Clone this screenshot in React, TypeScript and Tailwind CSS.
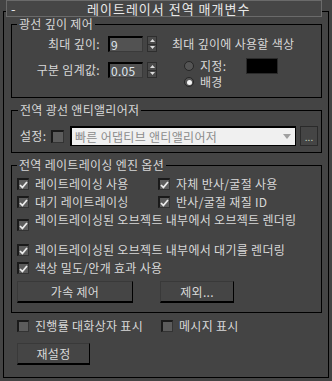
import React from "react";

function Check({ checked = false }: { checked?: boolean }) {
  return (
    <span className="flex h-[12px] w-[12px] shrink-0 items-center justify-center border-l-2 border-t-2 border-b border-r border-l-[#1a1a1a] border-t-[#1a1a1a] border-b-[#333] border-r-[#333] bg-[#5c5c5c]">
      {checked && (
        <svg width="9" height="8" viewBox="0 0 9 8">
          <path d="M1 4 L3.4 6.5 L8 1" fill="none" stroke="#ececec" strokeWidth="1.8" />
        </svg>
      )}
    </span>
  );
}

function Radio({ checked = false }: { checked?: boolean }) {
  return (
    <span className="flex h-[10px] w-[10px] shrink-0 items-center justify-center rounded-full border border-[#262626] bg-[#555555]">
      {checked && <span className="h-[5px] w-[5px] rounded-full bg-[#f4f4f4]" />}
    </span>
  );
}

function Spinner() {
  return (
    <div className="flex h-[16px] w-[10px] flex-col border border-[#2e2e2e] bg-[#4a4a4a]">
      <div className="flex flex-1 items-center justify-center border-b border-[#2e2e2e]">
        <svg width="5" height="3" viewBox="0 0 5 3">
          <path d="M0 3 L2.5 0 L5 3 Z" fill="#dcdcdc" />
        </svg>
      </div>
      <div className="flex flex-1 items-center justify-center">
        <svg width="5" height="3" viewBox="0 0 5 3">
          <path d="M0 0 L2.5 3 L5 0 Z" fill="#dcdcdc" />
        </svg>
      </div>
    </div>
  );
}

function NumField({ value }: { value: string }) {
  return (
    <div className="flex h-[16px] w-[35px] items-center border-l-2 border-t-2 border-b border-r border-l-black border-t-black border-b-[#3a3a3a] border-r-[#3a3a3a] bg-[#525252] pl-[1px] text-[#dfe6ee]">
      {value}
    </div>
  );
}

function Button({ label, w }: { label: string; w: string }) {
  return (
    <div
      className={`flex h-[22px] ${w} items-center justify-center border-l border-t border-b-2 border-r border-l-[#393939] border-t-[#393939] border-b-black border-r-black bg-[#454545]`}
    >
      {label}
    </div>
  );
}

function Row({ checked, label }: { checked?: boolean; label: string }) {
  return (
    <div className="flex h-[14px] items-center gap-[6px]">
      <Check checked={checked} />
      <span className="whitespace-nowrap">{label}</span>
    </div>
  );
}

export default function App() {
  return (
    <div className="h-[381px] w-[332px] overflow-hidden bg-[#444444] font-['Noto_Sans_CJK_KR',sans-serif] text-[12px] leading-[14px] tracking-[0.3px] text-[#d8d8d8]">
      <div className="relative z-10 ml-[6px] flex h-[17px] w-[316px] items-center border border-[#6a6a6a] bg-[#464646] text-[13px] leading-[15px] tracking-[1px] text-[#e8e8e8]">
        <span className="w-[80px] pl-[4px]">-</span>
        <span className="whitespace-nowrap">레이트레이서 전역 매개변수</span>
      </div>

      <div className="-mt-[6px] ml-[3px] flex h-[367px] w-[326px] flex-col border border-black pl-[7px] pr-[6px] pt-[5px]">
        <fieldset className="border border-black">
          <legend className="ml-[5px] px-[2px]">광선 깊이 제어</legend>
          <div className="flex pb-[8px] pt-[5px]">
            <div className="flex flex-col">
              <div className="flex h-[16px] items-center">
                <span className="w-[88px] whitespace-nowrap text-right">최대 깊이:</span>
                <div className="ml-[8px]">
                  <NumField value="9" />
                </div>
                <div className="ml-[4px]">
                  <Spinner />
                </div>
              </div>
              <div className="mt-[10px] flex h-[16px] items-center">
                <span className="w-[88px] whitespace-nowrap text-right">구분 임계값:</span>
                <div className="ml-[8px]">
                  <NumField value="0.05" />
                </div>
                <div className="ml-[4px]">
                  <Spinner />
                </div>
              </div>
            </div>
            <div className="ml-[15px] flex flex-col">
              <div className="flex h-[16px] items-center whitespace-nowrap">최대 깊이에 사용할 색상</div>
              <div className="ml-[12px] mt-[6px] flex h-[16px] items-center">
                <Radio />
                <span className="ml-[6px] w-[46px]">지정:</span>
                <span className="h-[16px] w-[32px] border border-[#2a2a2a] bg-black" />
              </div>
              <div className="ml-[12px] mt-[1px] flex h-[14px] items-center">
                <Radio checked />
                <span className="ml-[6px]">배경</span>
              </div>
            </div>
          </div>
        </fieldset>

        <fieldset className="mt-[5px] border border-black">
          <legend className="ml-[6px] px-[2px]">전역 광선 앤티앨리어저</legend>
          <div className="flex items-center pb-[6px] pl-[8px] pt-[9px]">
            <span className="w-[31px] whitespace-nowrap">설정:</span>
            <span className="flex h-[13px] w-[13px] shrink-0 border-l-2 border-t-2 border-b border-r border-l-[#1a1a1a] border-t-[#1a1a1a] border-b-[#333] border-r-[#333] bg-[#5c5c5c]" />
            <div className="ml-[6px] flex h-[20px] w-[226px] items-center justify-between border-l-2 border-t-2 border-b border-r border-black bg-[#f0f0f0] pl-[3px] pr-[4px] text-[#8c8c8c]">
              <span className="whitespace-nowrap">빠른 어댑티브 앤티앨리어저</span>
              <svg width="8" height="5" viewBox="0 0 8 5">
                <path d="M0 0 L8 0 L4 5 Z" fill="#a0a0a0" />
              </svg>
            </div>
            <div className="ml-[4px] flex h-[20px] w-[18px] items-end justify-center border border-[#2a2a2a] bg-[#454545] pb-[3px] text-[10px] leading-[10px] tracking-normal text-[#c8d8c0]">
              ...
            </div>
          </div>
        </fieldset>

        <fieldset className="mt-[5px] border border-black">
          <legend className="ml-[5px] px-[2px]">전역 레이트레이싱 엔진 옵션</legend>
          <div className="flex flex-col pb-[9px] pl-[5px] pt-[5px]">
            <div className="flex">
              <div className="w-[141px]">
                <Row checked label="레이트레이싱 사용" />
              </div>
              <Row checked label="자체 반사/굴절 사용" />
            </div>
            <div className="mt-[4px] flex">
              <div className="w-[141px]">
                <Row checked label="대기 레이트레이싱" />
              </div>
              <Row checked label="반사/굴절 재질 ID" />
            </div>
            <div className="mt-[4px] flex h-[30px] items-start gap-[6px]">
              <div className="mt-[6px]">
                <Check checked />
              </div>
              <span className="whitespace-nowrap">레이트레이싱된 오브젝트 내부에서 오브젝트 렌더링</span>
            </div>
            <Row checked label="레이트레이싱된 오브젝트 내부에서 대기를 렌더링" />
            <div className="mt-[4px]">
              <Row checked label="색상 밀도/안개 효과 사용" />
            </div>
            <div className="mt-[6px] flex gap-[27px]">
              <Button label="가속 제어" w="w-[116px]" />
              <Button label="제외..." w="w-[74px]" />
            </div>
          </div>
        </fieldset>

        <div className="ml-[6px] mt-[6px] flex">
          <div className="w-[144px]">
            <Row label="진행률 대화상자 표시" />
          </div>
          <Row label="메시지 표시" />
        </div>
        <div className="ml-[6px] mt-[10px]">
          <Button label="재설정" w="w-[73px]" />
        </div>
      </div>
    </div>
  );
}
